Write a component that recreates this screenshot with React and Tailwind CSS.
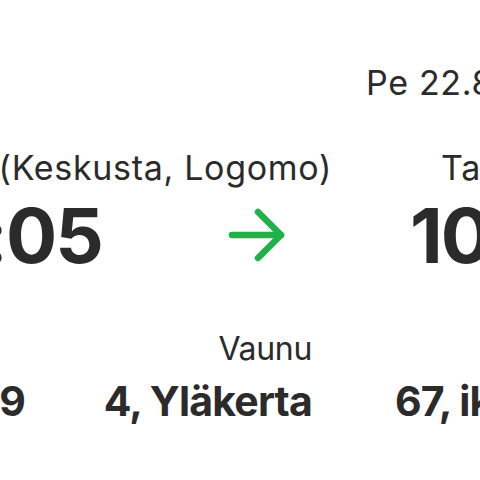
const Arrow = () => (
  <svg width="62" height="56" viewBox="0 0 62 56" fill="none" className="shrink-0">
    <path d="M6 28 H55" stroke="#22b04b" strokeWidth="6.5" strokeLinecap="round" />
    <path d="M32 5 L55 28 L32 51" stroke="#22b04b" strokeWidth="6.5" strokeLinecap="round" strokeLinejoin="round" />
  </svg>
)

export default function App() {
  return (
    <div
      className="w-[480px] h-[480px] overflow-hidden bg-white text-[#2b2b2b] whitespace-nowrap"
      style={{ fontFamily: 'Inter, "Liberation Sans", sans-serif' }}
    >
      <div className="flex pt-[66px] pl-[366px] text-[34px] leading-none tracking-[0.02em]">Pe 22.8.</div>

      <div className="flex mt-[51px] text-[34px] leading-none tracking-[0.02em]">
        <div className="w-[332px] shrink-0 flex justify-end">
          <span className="shrink-0">Turku (Keskusta, Logomo)</span>
        </div>
        <span className="ml-[109px] shrink-0">Tampere</span>
      </div>

      <div className="flex items-center mt-[12px] text-[76px] leading-none font-bold tracking-tight">
        <div className="w-[102px] shrink-0 flex justify-end">
          <span className="shrink-0">9:05</span>
        </div>
        <div className="ml-[124px]">
          <Arrow />
        </div>
        <span className="ml-[122px] shrink-0">10:35</span>
      </div>

      <div className="flex mt-[60px] text-[32px] leading-none tracking-[-0.01em]">
        <div className="w-[312px] shrink-0 flex justify-end">
          <span className="shrink-0">Vaunu</span>
        </div>
      </div>

      <div className="flex mt-[16px] text-[41px] leading-none font-bold tracking-[-0.02em]">
        <div className="w-[25px] shrink-0 flex justify-end">
          <span className="shrink-0">IC 949</span>
        </div>
        <div className="w-[287px] shrink-0 flex justify-end">
          <span className="shrink-0">4, Yläkerta</span>
        </div>
        <span className="ml-[83px] shrink-0">67, ikkuna</span>
      </div>
    </div>
  )
}
